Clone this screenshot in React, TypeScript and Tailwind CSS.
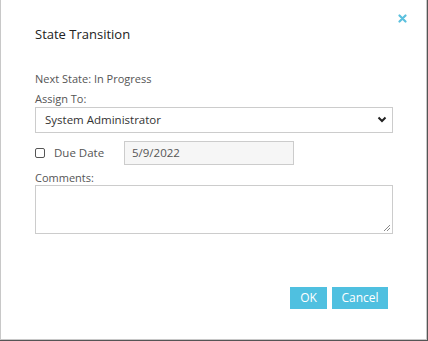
export default function App() {
  return (
    <div className="flex h-[341px] w-[428px] bg-[#555]">
      <div
        className="relative flex h-[340px] w-[427px] flex-col border-x border-b border-[#c8c8c8] bg-white text-[11px] text-[#555]"
        style={{ fontFamily: '"Open Sans", "Liberation Sans", sans-serif' }}
      >
        <button className="absolute right-[19px] top-[14px]">
          <svg width="9" height="9" viewBox="0 0 9 9">
            <path d="M1.5 1.5 L7.5 7.5 M7.5 1.5 L1.5 7.5" stroke="#5bc0de" strokeWidth="2.2" strokeLinecap="round" />
          </svg>
        </button>

        <h1 className="ml-[34px] mt-[25px] text-[13px] text-[#222]">State Transition</h1>

        <div className="ml-[34px] mr-[33px] mt-[26px] flex flex-col">
          <p className="leading-[16px]">Next State: In Progress</p>
          <label className="mt-[4px] leading-[16px]">Assign To:</label>
          <div className="flex h-[26px] items-center justify-between border border-[#ccc] pl-[9px] pr-[5px] text-[#333]">
            <span className="text-[11.5px]">System Administrator</span>
            <svg width="10" height="7" viewBox="0 0 10 7">
              <path d="M1.5 1.5 L5 5 L8.5 1.5" fill="none" stroke="#222" strokeWidth="2" />
            </svg>
          </div>

          <div className="mt-[8px] flex items-center">
            <span className="h-[10px] w-[10px] rounded-[2px] border border-[#555] bg-white" />
            <span className="ml-[9px] w-[70px] text-[11.5px]">Due Date</span>
            <div className="flex h-[24px] w-[170px] items-center border border-[#ccc] bg-[#f6f6f6] pl-[7px] text-[11.5px]">
              5/9/2022
            </div>
          </div>

          <label className="mt-[6px] leading-[14px]">Comments:</label>
          <div className="relative h-[49px] border border-[#ccc]">
            <svg className="absolute bottom-[2px] right-[2px]" width="7" height="7" viewBox="0 0 7 7">
              <path d="M1 7 L7 1 M4 7 L7 4" stroke="#888" strokeWidth="1" />
            </svg>
          </div>
        </div>

        <div className="mr-[38px] mt-[53px] flex justify-end gap-[5px]">
          <button className="h-[22px] w-[37px] bg-[#4fc0e0] text-[12px] text-white">OK</button>
          <button className="h-[22px] w-[56px] bg-[#4fc0e0] text-[12px] text-white">Cancel</button>
        </div>
      </div>
    </div>
  );
}
